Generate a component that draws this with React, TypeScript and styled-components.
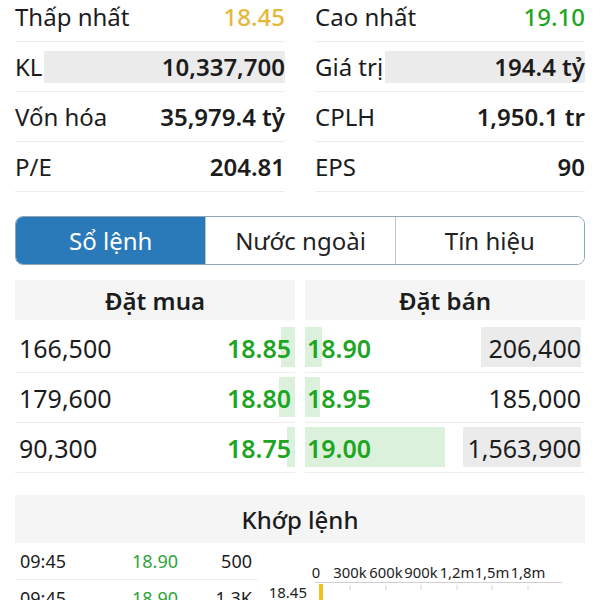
import React from "react";
import styled, { createGlobalStyle } from "styled-components";

const GlobalStyle = createGlobalStyle`
  html, body {
    margin: 0;
    padding: 0;
    overflow: hidden;
    background: #ffffff;
  }
  body {
    font-family: "Noto Sans", "Open Sans", sans-serif;
    color: #1c1c1c;
  }
`;

const GREEN = "#1ea524";
const YELLOW = "#e4b83a";

const Page = styled.div`
  width: 570px;
  padding: 0 15px;
`;

const StatsGrid = styled.div`
  display: grid;
  grid-template-columns: 1fr 1fr;
  column-gap: 30px;
  margin-top: -8px;
`;

const StatRow = styled.div`
  height: 49px;
  border-bottom: 1px solid #ededed;
  display: flex;
  align-items: center;
  justify-content: space-between;
  font-size: 24px;
`;

const StatLabel = styled.span`
  white-space: nowrap;
`;

const StatValue = styled.span<{ $color?: string; $bar?: boolean }>`
  font-weight: ${(p) => (p.$color ? 500 : 600)};
  color: ${(p) => p.$color || "#1c1c1c"};
  white-space: nowrap;
  ${(p) =>
    p.$bar &&
    `
    flex: 1;
    margin-left: 2px;
    height: 32px;
    line-height: 32px;
    text-align: right;
    background: #ebebeb;
  `}
`;

const Tabs = styled.div`
  margin-top: 24px;
  height: 47px;
  display: grid;
  grid-template-columns: repeat(3, 1fr);
  border: 1px solid #8ea6b8;
  border-radius: 8px;
  overflow: hidden;
`;

const Tab = styled.div<{ $active?: boolean }>`
  display: flex;
  align-items: center;
  justify-content: center;
  font-size: 24px;
  background: ${(p) => (p.$active ? "#2a7ab9" : "#ffffff")};
  color: ${(p) => (p.$active ? "#ffffff" : "#222222")};
  & + & {
    border-left: 1px solid #b9c6d0;
  }
`;

const Book = styled.div`
  margin-top: 15px;
  display: grid;
  grid-template-columns: 1fr 1fr;
  column-gap: 10px;
`;

const BookSide = styled.div`
  display: flex;
  flex-direction: column;
`;

const SideHeader = styled.div`
  height: 40px;
  margin-bottom: 3px;
  background: #f5f5f5;
  display: flex;
  align-items: center;
  justify-content: center;
  font-size: 24px;
  font-weight: 600;
`;

const BookRow = styled.div`
  position: relative;
  height: 49px;
  border-bottom: 1px solid #ededed;
  display: flex;
  align-items: center;
  justify-content: space-between;
  font-size: 25px;
`;

const Bar = styled.div<{ $side: "left" | "right"; $tone: "green" | "gray" }>`
  position: absolute;
  top: 4px;
  bottom: 5px;
  ${(p) => (p.$side === "left" ? "left: 0;" : "right: 0;")}
  background: ${(p) => (p.$tone === "green" ? "#dcf1dc" : "#ebebeb")};
`;

const Cell = styled.span<{ $price?: boolean; $align: "left" | "right"; $pad: number }>`
  position: relative;
  padding: ${(p) => (p.$align === "left" ? `0 0 0 ${p.$pad}px` : `0 ${p.$pad}px 0 0`)};
  color: ${(p) => (p.$price ? GREEN : "#1c1c1c")};
  font-weight: ${(p) => (p.$price ? 600 : 400)};
  white-space: nowrap;
`;

const MatchHeader = styled.div`
  margin-top: 22px;
  height: 48px;
  background: #f5f5f5;
  display: flex;
  align-items: center;
  justify-content: center;
  font-size: 24px;
  font-weight: 500;
`;

const MatchBody = styled.div`
  display: grid;
  grid-template-columns: 243px 1fr;
`;

const MatchList = styled.div`
  display: flex;
  flex-direction: column;
`;

const MatchRow = styled.div`
  height: 36px;
  border-bottom: 1px solid #ededed;
  display: grid;
  grid-template-columns: 112px 1fr auto;
  align-items: center;
  padding: 0 6px 0 5px;
  font-size: 18px;
`;

const MatchPrice = styled.span`
  color: #2fa43a;
`;

const ChartBox = styled.div`
  height: 70px;
  margin-left: -15px;
`;

interface BookEntry {
  volume: string;
  price: string;
  priceBar: number;
  volumeBar?: number;
}

const bids: BookEntry[] = [
  { volume: "166,500", price: "18.85", priceBar: 14 },
  { volume: "179,600", price: "18.80", priceBar: 16 },
  { volume: "90,300", price: "18.75", priceBar: 8 },
];

const asks: BookEntry[] = [
  { volume: "206,400", price: "18.90", priceBar: 17, volumeBar: 100 },
  { volume: "185,000", price: "18.95", priceBar: 15 },
  { volume: "1,563,900", price: "19.00", priceBar: 140, volumeBar: 118 },
];

const matches = [
  { time: "09:45", price: "18.90", volume: "500" },
  { time: "09:45", price: "18.90", volume: "1.3K" },
];

const ticks = [
  { x: 58, label: "0" },
  { x: 92, label: "300k" },
  { x: 128, label: "600k" },
  { x: 163, label: "900k" },
  { x: 199, label: "1,2m" },
  { x: 234, label: "1,5m" },
  { x: 270, label: "1,8m" },
];

function VolumeChart() {
  return (
    <svg width="342" height="70" viewBox="-15 0 342 70">
      {ticks.map((t) => (
        <text
          key={t.label}
          x={t.x}
          y={35}
          textAnchor="middle"
          fontSize="14.8"
          fill="#222"
          fontFamily="Noto Sans, sans-serif"
        >
          {t.label}
        </text>
      ))}
      <line x1={57} y1={39.5} x2={304} y2={39.5} stroke="#cfcfcf" strokeWidth="1" />
      {ticks.slice(1).map((t) => (
        <line key={t.x} x1={t.x} y1={42} x2={t.x} y2={47} stroke="#d6d6d6" strokeWidth="1" />
      ))}
      <text x={49} y={55} textAnchor="end" fontSize="15" fill="#222" fontFamily="Noto Sans, sans-serif">
        18.45
      </text>
      <rect x={61} y={41} width={4} height={29} fill="#f0c21c" />
    </svg>
  );
}

export default function App() {
  return (
    <>
      <GlobalStyle />
      <Page>
        <StatsGrid>
          <StatRow>
            <StatLabel>Thấp nhất</StatLabel>
            <StatValue $color={YELLOW}>18.45</StatValue>
          </StatRow>
          <StatRow>
            <StatLabel>Cao nhất</StatLabel>
            <StatValue $color={GREEN}>19.10</StatValue>
          </StatRow>
          <StatRow>
            <StatLabel>KL</StatLabel>
            <StatValue $bar>10,337,700</StatValue>
          </StatRow>
          <StatRow>
            <StatLabel>Giá trị</StatLabel>
            <StatValue $bar>194.4 tỷ</StatValue>
          </StatRow>
          <StatRow>
            <StatLabel>Vốn hóa</StatLabel>
            <StatValue>35,979.4 tỷ</StatValue>
          </StatRow>
          <StatRow>
            <StatLabel>CPLH</StatLabel>
            <StatValue>1,950.1 tr</StatValue>
          </StatRow>
          <StatRow>
            <StatLabel>P/E</StatLabel>
            <StatValue>204.81</StatValue>
          </StatRow>
          <StatRow>
            <StatLabel>EPS</StatLabel>
            <StatValue>90</StatValue>
          </StatRow>
        </StatsGrid>

        <Tabs>
          <Tab $active>Sổ lệnh</Tab>
          <Tab>Nước ngoài</Tab>
          <Tab>Tín hiệu</Tab>
        </Tabs>

        <Book>
          <BookSide>
            <SideHeader>Đặt mua</SideHeader>
            {bids.map((b) => (
              <BookRow key={b.price}>
                <Bar $side="right" $tone="green" style={{ width: b.priceBar }} />
                <Cell $align="left" $pad={4}>
                  {b.volume}
                </Cell>
                <Cell $align="right" $pad={4} $price>
                  {b.price}
                </Cell>
              </BookRow>
            ))}
          </BookSide>
          <BookSide>
            <SideHeader>Đặt bán</SideHeader>
            {asks.map((a) => (
              <BookRow key={a.price}>
                <Bar $side="left" $tone="green" style={{ width: a.priceBar }} />
                {a.volumeBar ? (
                  <Bar $side="right" $tone="gray" style={{ width: a.volumeBar, right: 4 }} />
                ) : null}
                <Cell $align="left" $pad={2} $price>
                  {a.price}
                </Cell>
                <Cell $align="right" $pad={4}>
                  {a.volume}
                </Cell>
              </BookRow>
            ))}
          </BookSide>
        </Book>

        <MatchHeader>Khớp lệnh</MatchHeader>
        <MatchBody>
          <MatchList>
            {matches.map((m, i) => (
              <MatchRow key={i}>
                <span>{m.time}</span>
                <MatchPrice>{m.price}</MatchPrice>
                <span>{m.volume}</span>
              </MatchRow>
            ))}
          </MatchList>
          <ChartBox>
            <VolumeChart />
          </ChartBox>
        </MatchBody>
      </Page>
    </>
  );
}
